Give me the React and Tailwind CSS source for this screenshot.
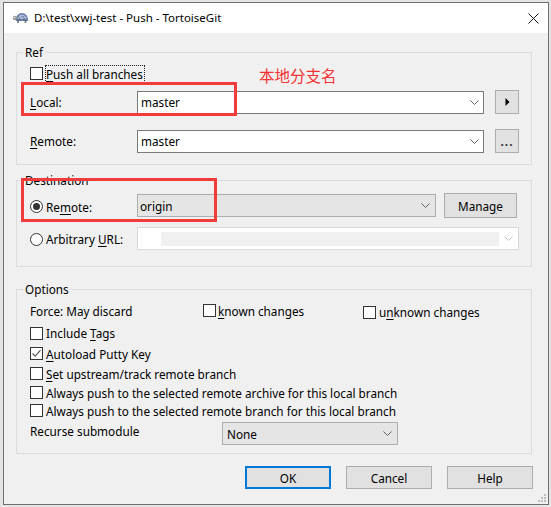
import React from 'react'

const ui = "font-['Noto_Sans',sans-serif] text-[11.75px] leading-[16px] text-black"

function U({ children }) {
  return <span className="underline decoration-1 underline-offset-[2px]">{children}</span>
}

function Check({ checked }) {
  return (
    <span className="flex h-[13px] w-[13px] shrink-0 items-center justify-center border border-[#333333] bg-white">
      {checked && (
        <svg width="11" height="11" viewBox="0 0 11 11">
          <path d="M1.5 5.5 4.2 8.2 9.5 2.2" fill="none" stroke="#555555" strokeWidth="1.1" />
        </svg>
      )}
    </span>
  )
}

function Radio({ on }) {
  return (
    <span className="flex h-[13px] w-[13px] shrink-0 items-center justify-center rounded-full border border-[#333333] bg-white">
      {on && <span className="h-[7px] w-[7px] rounded-full bg-[#333333]" />}
    </span>
  )
}

function Chevron({ color = '#606060' }) {
  return (
    <svg width="9" height="5" viewBox="0 0 9 5" className="shrink-0">
      <path d="M0.5 0.5 4.5 4.5 8.5 0.5" fill="none" stroke={color} strokeWidth="1" />
    </svg>
  )
}

function TurtleIcon() {
  return (
    <svg width="17" height="12" viewBox="0 0 17 12" className="shrink-0">
      <path d="M4 8 C4 3 7 1 10 1 C13.5 1 16 4 16 8 Z" fill="#6c82ad" />
      <path d="M6 7 L8 3.5 L11 3 L13.5 5 L14 7.5 M8 3.5 L9 7 L11 3 M9 7 L13.5 5" fill="none" stroke="#c9d3e6" strokeWidth="0.8" />
      <circle cx="3" cy="6" r="2.3" fill="#9a9a9a" />
      <circle cx="2.4" cy="5.4" r="0.7" fill="#ffffff" />
      <rect x="5" y="8" width="2" height="3" fill="#8a8a8a" />
      <rect x="12.5" y="8" width="2" height="3" fill="#8a8a8a" />
      <rect x="4" y="7.6" width="12" height="1.2" fill="#4b5f88" />
    </svg>
  )
}

function TitleBar() {
  return (
    <div className="flex h-[30px] shrink-0 items-center bg-white pl-[8px] pr-[9px]">
      <TurtleIcon />
      <span className="ml-[5px] text-[11.5px]">D:\test\xwj-test - Push - TortoiseGit</span>
      <svg width="11" height="11" viewBox="0 0 11 11" className="ml-auto">
        <path d="M0.5 0.5 10.5 10.5 M10.5 0.5 0.5 10.5" stroke="#111111" strokeWidth="1" />
      </svg>
    </div>
  )
}

function Group({ title, className, children }) {
  return (
    <fieldset className={`ml-[12px] w-[516px] border border-[#dcdcdc] ${className}`}>
      <legend className="ml-[6px] px-[2px] leading-[16px]">{title}</legend>
      <div className="pl-[13px]">{children}</div>
    </fieldset>
  )
}

function SmallButton({ children }) {
  return (
    <div className="ml-[11px] flex h-[24px] w-[24px] items-center justify-center border border-[#adadad] bg-[#e1e1e1]">
      {children}
    </div>
  )
}

function RefGroup() {
  return (
    <Group title="Ref" className="mt-[11px] pb-[11px]">
      <div className="flex h-[27px] items-center">
        <Check />
        <span className="ml-[2px] border border-dotted border-[#222222] pr-[1px] leading-[16px]">
          <U>P</U>ush all branches
        </span>
      </div>
      <div className="mt-[3px] flex h-[24px] items-center">
        <span className="w-[107px]"><U>L</U>ocal:</span>
        <div className="flex h-[23px] w-[347px] items-center justify-between border border-[#7a7a7a] bg-white pl-[3px] pr-[4px]">
          <span>master</span>
          <Chevron />
        </div>
        <SmallButton>
          <svg width="5" height="8" viewBox="0 0 5 8">
            <path d="M0.5 0 L4.5 4 L0.5 8 Z" fill="#000000" />
          </svg>
        </SmallButton>
      </div>
      <div className="mt-[15px] flex h-[24px] items-center">
        <span className="w-[107px]"><U>R</U>emote:</span>
        <div className="flex h-[23px] w-[347px] items-center justify-between border border-[#7a7a7a] bg-white pl-[3px] pr-[4px]">
          <span>master</span>
          <Chevron />
        </div>
        <SmallButton>
          <span className="mt-[2px] text-[12px] font-bold leading-[12px] tracking-[1px] text-[#333333]">...</span>
        </SmallButton>
      </div>
    </Group>
  )
}

function DestinationGroup() {
  return (
    <Group title="Destination" className="mt-[7px] pb-[16px]">
      <div className="mt-[5px] flex h-[25px] items-center">
        <div className="flex w-[107px] items-center pt-[2px]">
          <Radio on />
          <span className="ml-[3px]">Re<U>m</U>ote:</span>
        </div>
        <div className="flex h-[23px] w-[299px] items-center justify-between border border-[#adadad] bg-[#e5e5e5] pl-[2px] pr-[5px]">
          <span>origin</span>
          <Chevron />
        </div>
        <div className="ml-[8px] flex h-[25px] w-[73px] items-center justify-center border border-[#adadad] bg-[#e1e1e1]">
          Mana<U>g</U>e
        </div>
      </div>
      <div className="mt-[9px] flex h-[23px] items-center">
        <div className="flex w-[107px] items-center pt-[1px]">
          <Radio />
          <span className="ml-[3px]">Arbitrary <U>U</U>RL:</span>
        </div>
        <div className="flex h-[23px] w-[382px] items-center border border-[#d9d9d9] bg-white pl-[23px] pr-[5px]">
          <div className="h-[14px] w-[338px] bg-[#f0f0f0]" />
          <span className="ml-auto">
            <Chevron color="#c2c2c2" />
          </span>
        </div>
      </div>
    </Group>
  )
}

function OptionRow({ className, checked, children }) {
  return (
    <div className={`flex items-center ${className}`}>
      <Check checked={checked} />
      <span className="ml-[3px]">{children}</span>
    </div>
  )
}

function OptionsGroup() {
  return (
    <Group title="Options" className="mt-[14px] pb-[8px]">
      <div className="mt-[1px] flex h-[25px] items-center">
        <span className="w-[173px]">Force: May discard</span>
        <div className="flex w-[160px] items-center">
          <Check />
          <span className="ml-[2px]"><U>k</U>nown changes</span>
        </div>
        <div className="flex items-center pt-[3px]">
          <Check />
          <span className="ml-[3px]">u<U>n</U>known changes</span>
        </div>
      </div>
      <OptionRow className="h-[20px]">Include <U>T</U>ags</OptionRow>
      <OptionRow className="h-[21px]" checked><U>A</U>utoload Putty Key</OptionRow>
      <OptionRow className="h-[19px]"><U>S</U>et upstream/track remote branch</OptionRow>
      <OptionRow className="h-[19px]">Always push to the selected remote archive for this local branch</OptionRow>
      <OptionRow className="h-[17px]">Always push to the selected remote branch for this local branch</OptionRow>
      <div className="mt-[3px] flex h-[23px] items-start">
        <span className="w-[192px] pt-[1px]">Recurse submodule</span>
        <div className="flex h-[23px] w-[176px] items-center justify-between border border-[#adadad] bg-[#e5e5e5] pl-[4px] pr-[5px]">
          <span>None</span>
          <Chevron />
        </div>
      </div>
    </Group>
  )
}

function Buttons() {
  return (
    <div className="mt-[12px] flex justify-end gap-[15px] pr-[15px]">
      <div className="flex h-[23px] w-[86px] items-center justify-center border-2 border-[#0078d7] bg-[#e1e1e1]">OK</div>
      <div className="flex h-[23px] w-[86px] items-center justify-center border border-[#adadad] bg-[#e1e1e1]">Cancel</div>
      <div className="flex h-[23px] w-[86px] items-center justify-center border border-[#adadad] bg-[#e1e1e1]">Help</div>
    </div>
  )
}

function SizeGrip() {
  return (
    <div className="mt-auto flex justify-end pb-[1px] pr-[1px]">
      <svg width="10" height="10" viewBox="0 0 10 10">
        <rect x="7" y="1" width="2" height="2" fill="#bdbdbd" />
        <rect x="4" y="4" width="2" height="2" fill="#bdbdbd" />
        <rect x="7" y="4" width="2" height="2" fill="#bdbdbd" />
        <rect x="1" y="7" width="2" height="2" fill="#bdbdbd" />
        <rect x="4" y="7" width="2" height="2" fill="#bdbdbd" />
        <rect x="7" y="7" width="2" height="2" fill="#bdbdbd" />
      </svg>
    </div>
  )
}

export default function App() {
  return (
    <div className={`relative h-[507px] w-[551px] overflow-hidden bg-[#e4e4e4] pl-[3px] pt-[2px] ${ui}`}>
      <div className="flex h-[503px] w-[546px] flex-col border border-[#6f6f6f] bg-[#f0f0f0]">
        <TitleBar />
        <RefGroup />
        <DestinationGroup />
        <OptionsGroup />
        <Buttons />
        <SizeGrip />
      </div>

      {/* red annotations drawn over the dialog */}
      <div className="absolute left-[21px] top-[82px] h-[34px] w-[216px] border-[3px] border-[#f23b3b]" />
      <div className="absolute left-[21px] top-[178px] h-[44px] w-[196px] border-[3px] border-[#f23b3b]" />
      <span className="absolute left-[259px] top-[66px] font-['Noto_Sans_CJK_SC',sans-serif] text-[15.5px] leading-[18px] text-[#f33333]">
        本地分支名
      </span>
    </div>
  )
}
